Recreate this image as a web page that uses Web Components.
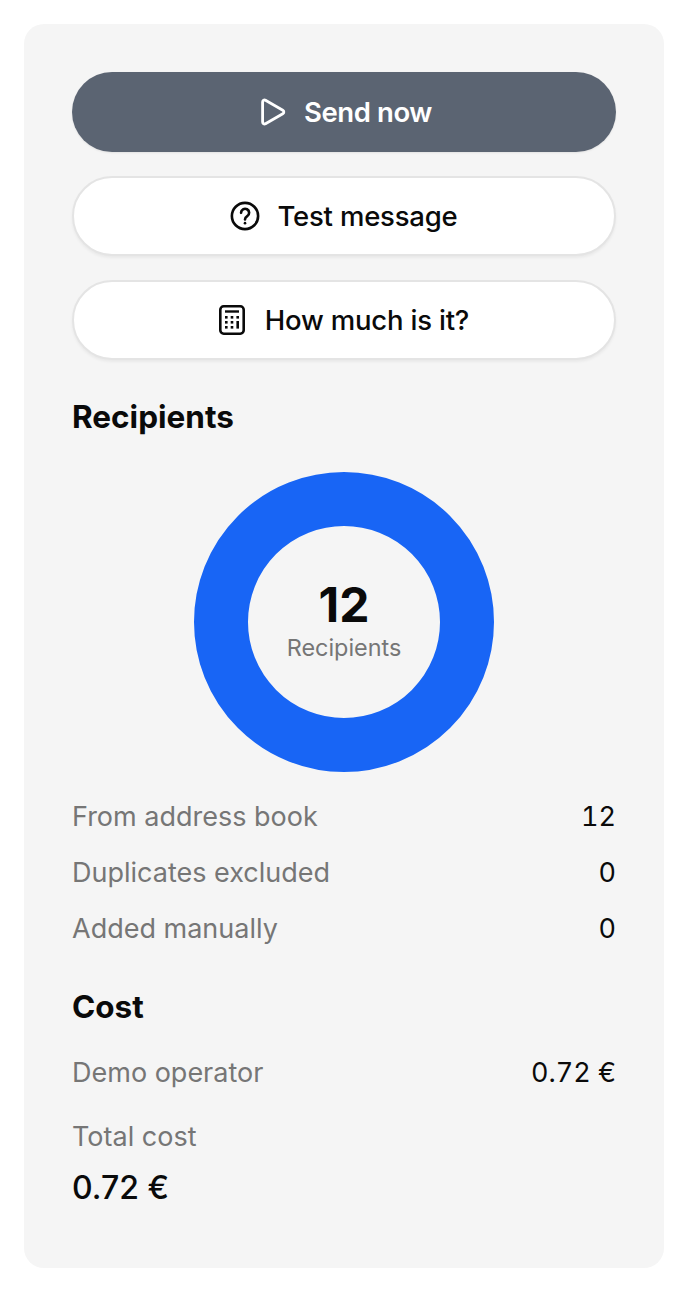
<!DOCTYPE html>
<html>
<head>
<meta charset="utf-8">
<style>
  html, body { margin: 0; padding: 0; background: #ffffff; }
  body { font-family: Inter, "Liberation Sans", sans-serif; color: #0a0a0a; }
</style>
</head>
<body>
<summary-panel>
  <action-button kind="primary" icon="play" gap="18">Send now</action-button>
  <action-button icon="help" gap="17">Test message</action-button>
  <action-button icon="calc" gap="20">How much is it?</action-button>
  <section-title style="margin-top:15px">Recipients</section-title>
  <recipient-donut count="12" label="Recipients"></recipient-donut>
  <stat-row label="From address book" value="12"></stat-row>
  <stat-row label="Duplicates excluded" value="0"></stat-row>
  <stat-row label="Added manually" value="0"></stat-row>
  <section-title style="margin-top:33px">Cost</section-title>
  <stat-row label="Demo operator" value="0.72 €" style="margin-top:19px"></stat-row>
  <total-cost label="Total cost" value="0.72 €"></total-cost>
</summary-panel>
<script>
const ICONS = {
  play: `<svg width="30" height="30" viewBox="-4 0 30 30" fill="none" stroke="currentColor" stroke-width="2.8" stroke-linejoin="round"><path d="M2.6 5 C2.6 3.4 4.2 2.6 5.5 3.3 L22.8 13.2 C24.2 14 24.2 16 22.8 16.8 L5.5 26.7 C4.2 27.4 2.6 26.6 2.6 25 Z"/></svg>`,
  help: `<svg width="30" height="30" viewBox="0 0 32 32" fill="none" stroke="currentColor" stroke-width="2.8" stroke-linecap="round"><circle cx="16" cy="16" r="14"/><path d="M11.8 12.6 a4.3 4.3 0 1 1 6.6 3.6 c-1.5 1-2.4 1.8-2.4 3.4"/><circle cx="16" cy="23.6" r="1.4" fill="currentColor" stroke="none"/></svg>`,
  calc: `<svg width="26" height="30" viewBox="0 0 26 30" fill="none" stroke="currentColor"><rect x="1.3" y="1.3" width="23.4" height="27.4" rx="3.4" stroke-width="2.6"/><path d="M6 6.5 H20" stroke-width="2.4"/><g fill="currentColor" stroke="none"><rect x="6" y="11" width="2.6" height="2.6"/><rect x="11.7" y="11" width="2.6" height="2.6"/><rect x="17.4" y="11" width="2.6" height="2.6"/><rect x="6" y="16" width="2.6" height="2.6"/><rect x="11.7" y="16" width="2.6" height="2.6"/><rect x="17.4" y="16" width="2.6" height="7.6"/><rect x="6" y="21" width="2.6" height="2.6"/><rect x="11.7" y="21" width="2.6" height="2.6"/></g></svg>`
};

class SummaryPanel extends HTMLElement {
  constructor() {
    super();
    this.attachShadow({ mode: "open" }).innerHTML = `
      <style>
        :host { display: block; box-sizing: border-box; width: 640px; height: 1244px; margin: 24px; padding: 48px; background: #f5f5f5; border-radius: 20px; }
        .stack { display: flex; flex-direction: column; }
      </style>
      <div class="stack"><slot></slot></div>`;
  }
}

class ActionButton extends HTMLElement {
  constructor() {
    super();
    this.attachShadow({ mode: "open" });
  }
  connectedCallback() {
    const primary = this.getAttribute("kind") === "primary";
    this.shadowRoot.innerHTML = `
      <style>
        :host { display: flex; box-sizing: border-box; height: 80px; margin-bottom: 24px; align-items: center; justify-content: center; gap: ${this.getAttribute("gap")}px; border-radius: 40px; font-size: 27.5px; font-weight: ${primary ? 600 : 500}; letter-spacing: ${primary ? -0.4 : -0.2}px; }
        .ico { display: flex; }
      </style>
      <span class="ico">${ICONS[this.getAttribute("icon")]}</span><slot></slot>`;
    this.style.cssText = primary
      ? "background:#5b6472;color:#fff;box-shadow:0 1px 2px rgba(0,0,0,.08)"
      : "background:#fff;color:#0a0a0a;border:2px solid #e4e4e4;box-shadow:0 2px 3px rgba(0,0,0,.05)";
  }
}

class SectionTitle extends HTMLElement {
  constructor() {
    super();
    this.attachShadow({ mode: "open" }).innerHTML = `
      <style>:host { display: block; font-size: 31.5px; font-weight: 700; line-height: 36px; color: #0a0a0a; }</style>
      <slot></slot>`;
  }
}

class RecipientDonut extends HTMLElement {
  constructor() {
    super();
    this.attachShadow({ mode: "open" });
  }
  connectedCallback() {
    this.shadowRoot.innerHTML = `
      <style>
        :host { display: flex; justify-content: center; margin: 37px 0 16px; }
        .ring { box-sizing: border-box; width: 300px; height: 300px; padding-bottom: 2px; border: 54px solid #1865f5; border-radius: 50%; display: flex; flex-direction: column; align-items: center; justify-content: center; }
        .num { font-size: 48px; font-weight: 700; line-height: 52px; margin-bottom: 2px; color: #0a0a0a; }
        .lbl { font-size: 23.4px; line-height: 30px; color: #767676; }
      </style>
      <div class="ring">
        <div class="num">${this.getAttribute("count")}</div>
        <div class="lbl">${this.getAttribute("label")}</div>
      </div>`;
  }
}

class StatRow extends HTMLElement {
  constructor() {
    super();
    this.attachShadow({ mode: "open" });
  }
  connectedCallback() {
    this.shadowRoot.innerHTML = `
      <style>
        :host { display: flex; justify-content: space-between; align-items: center; height: 56px; font-size: 27px; }
        .l { color: #767676; }
        .v { color: #0a0a0a; font-variant-numeric: tabular-nums; }
      </style>
      <span class="l">${this.getAttribute("label")}</span>
      <span class="v">${this.getAttribute("value")}</span>`;
  }
}

class TotalCost extends HTMLElement {
  constructor() {
    super();
    this.attachShadow({ mode: "open" });
  }
  connectedCallback() {
    this.shadowRoot.innerHTML = `
      <style>
        :host { display: block; margin-top: 19px; }
        .l { font-size: 27px; line-height: 36px; color: #767676; }
        .v { font-size: 32px; font-weight: 500; line-height: 40px; margin-top: 13px; color: #0a0a0a; }
      </style>
      <div class="l">${this.getAttribute("label")}</div>
      <div class="v">${this.getAttribute("value")}</div>`;
  }
}

customElements.define("summary-panel", SummaryPanel);
customElements.define("action-button", ActionButton);
customElements.define("section-title", SectionTitle);
customElements.define("recipient-donut", RecipientDonut);
customElements.define("stat-row", StatRow);
customElements.define("total-cost", TotalCost);
</script>
</body>
</html>
